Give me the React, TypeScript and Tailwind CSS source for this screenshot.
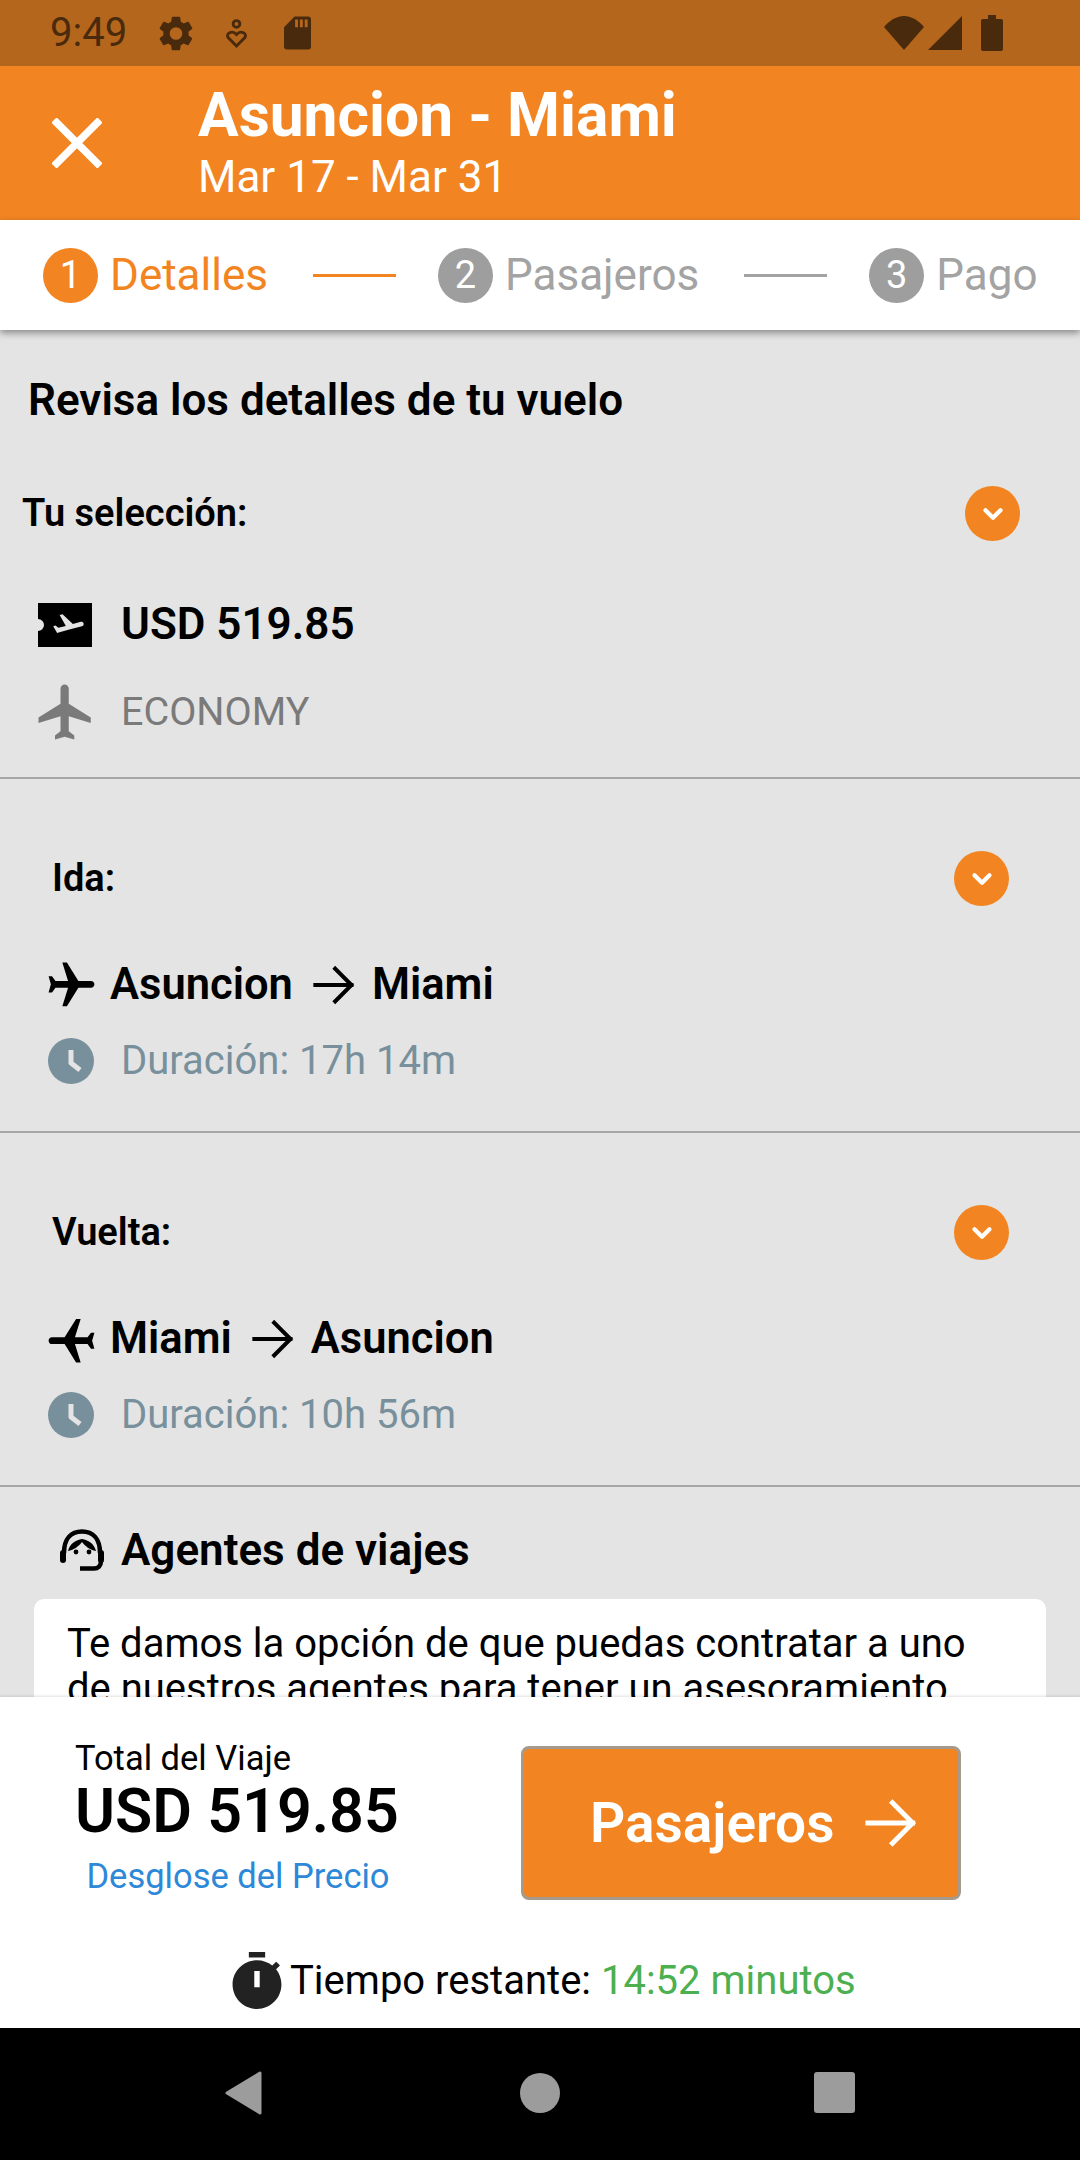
import { ChevronDown } from 'lucide-react';

const FONT = 'font-[Roboto,sans-serif]';

function Plane({ className, rotate }: { className: string; rotate?: number }) {
  return (
    <svg viewBox="0 0 24 24" className={className} fill="currentColor" style={rotate ? { transform: `rotate(${rotate}deg)` } : undefined}>
      <path d="M21 16v-2l-8-5V3.5c0-.83-.67-1.5-1.5-1.5S10 2.67 10 3.5V9l-8 5v2l8-2.5V19l-2 1.5V22l3.5-1 3.5 1v-1.5L13 19v-5.5l8 2.5z" />
    </svg>
  );
}

function Clock() {
  return (
    <svg viewBox="0 0 46 46" className="h-[46px] w-[46px] shrink-0">
      <circle cx="23" cy="23" r="23" fill="#78909c" />
      <path d="M23 12v13l9 7" fill="none" stroke="#e4e4e4" strokeWidth="5" strokeLinejoin="round" />
    </svg>
  );
}

function Arrow({ className }: { className: string }) {
  return (
    <svg viewBox="0 0 36 36" className={className} fill="none" stroke="currentColor" strokeWidth="3.4" strokeLinecap="square">
      <path d="M2 18h31M19 4l14 14-14 14" />
    </svg>
  );
}

function Toggle() {
  return (
    <div className="flex h-[55px] w-[55px] items-center justify-center rounded-full bg-[#f28522]">
      <ChevronDown className="h-[30px] w-[30px] text-white" strokeWidth={3.4} />
    </div>
  );
}

function Step({ n, label, active }: { n: number; label: string; active?: boolean }) {
  return (
    <div className="flex items-center gap-[12px]">
      <div className={`flex h-[55px] w-[55px] items-center justify-center rounded-full text-[38px] text-white ${active ? 'bg-[#f28522]' : 'bg-[#9e9e9e]'}`}>{n}</div>
      <span className={`text-[44px] leading-none ${active ? 'text-[#f28522]' : 'text-[#a3a3a3]'}`}>{label}</span>
    </div>
  );
}

function Leg({ label, from, to, duration, rotate }: { label: string; from: string; to: string; duration: string; rotate: number }) {
  return (
    <section className="h-[354px] border-b-2 border-[#a6a6a6]">
      <div className="flex h-[184px] items-start justify-between pl-[52px] pr-[71px] pt-[72px]">
        <span className="text-[38px] font-semibold leading-[55px] text-black">{label}</span>
        <Toggle />
      </div>
      <div className="flex h-[44px] items-center pl-[44px]">
        <Plane className="h-[55px] w-[55px] shrink-0 text-black" rotate={rotate} />
        <span className="ml-[11px] text-[43.500px] font-semibold leading-none text-black">{from}</span>
        <Arrow className="ml-[20px] mr-[17px] h-[42px] w-[42px] text-black" />
        <span className="text-[43.500px] font-semibold leading-none text-black">{to}</span>
      </div>
      <div className="mt-[30px] flex h-[48px] items-center pl-[48px]">
        <Clock />
        <span className="ml-[27px] text-[40px] leading-none text-[#78909c]">{duration}</span>
      </div>
    </section>
  );
}

export default function App() {
  return (
    <div className={`flex h-[2160px] w-[1080px] flex-col overflow-hidden bg-[#e4e4e4] ${FONT}`}>
      {/* barra de estado */}
      <div className="flex h-[66px] shrink-0 items-center bg-[#b4661c] pl-[50px] pr-[77px] text-[#4a2a0c]">
        <span className="text-[40px] leading-none text-[#4a2a0c]">9:49</span>
        <svg viewBox="2.500 2 19 20" className="ml-[32px] h-[35px] w-[34px]" fill="currentColor">
          <path d="M19.14 12.94c.04-.3.06-.61.06-.94s-.02-.64-.07-.94l2.03-1.58a.49.49 0 0 0 .12-.61l-1.92-3.32a.49.49 0 0 0-.59-.22l-2.39.96a7 7 0 0 0-1.62-.94l-.36-2.54a.48.48 0 0 0-.48-.41h-3.84a.48.48 0 0 0-.47.41l-.36 2.54c-.59.24-1.13.57-1.62.94l-2.39-.96a.48.48 0 0 0-.59.22L2.69 8.87a.47.47 0 0 0 .12.61l2.03 1.58c-.05.3-.09.63-.09.94s.02.64.07.94l-2.03 1.58a.49.49 0 0 0-.12.61l1.92 3.32c.12.22.37.29.59.22l2.39-.96c.5.38 1.03.7 1.62.94l.36 2.54c.05.24.24.41.48.41h3.84c.24 0 .44-.17.47-.41l.36-2.54c.59-.24 1.13-.56 1.62-.94l2.39.96c.22.08.47 0 .59-.22l1.92-3.32a.47.47 0 0 0-.12-.61l-2.01-1.58zM12 15.6A3.6 3.6 0 1 1 12 8.400a3.6 3.6 0 0 1 0 7.200z" />
        </svg>
        <svg viewBox="0 0 24 30" className="ml-[32px] h-[29px] w-[23px]" fill="none" stroke="currentColor" strokeWidth="3">
          <circle cx="12" cy="5" r="3.500" />
          <path d="M12 28l-8.500-8.500c-3.500-4.500 4-8.500 8.500-3.500 4.500-5 12-1 8.500 3.500z" />
        </svg>
        <svg viewBox="0 0 28 34" className="ml-[36px] h-[34px] w-[27px]" fill="currentColor">
          <path d="M11 0h14a3 3 0 0 1 3 3v28a3 3 0 0 1-3 3H3a3 3 0 0 1-3-3V11zM11.500 3v8h3V3zm5 0v8h3V3zm5 0v8h3V3z" fillRule="evenodd" />
        </svg>
        <div className="flex-1" />
        <svg viewBox="0 0 40 34" className="h-[34px] w-[40px]" fill="currentColor">
          <path d="M20 34L0 11C5 5 12 0 20 0s15 5 20 11z" />
        </svg>
        <svg viewBox="0 0 34 34" className="ml-[4px] h-[34px] w-[34px]" fill="currentColor">
          <path d="M34 0v34H0z" />
        </svg>
        <svg viewBox="0 0 22 36" className="ml-[19px] h-[36px] w-[22px]" fill="currentColor">
          <path d="M7 0h8v4h5a2 2 0 0 1 2 2v28a2 2 0 0 1-2 2H2a2 2 0 0 1-2-2V6a2 2 0 0 1 2-2h5z" />
        </svg>
      </div>

      {/* cabecera */}
      <header className="flex h-[154px] shrink-0 items-center bg-[#f28522] text-white">
        <svg viewBox="0 0 50 50" className="ml-[52px] h-[50px] w-[50px]" stroke="currentColor" strokeWidth="7.500">
          <path d="M2 2l46 46M48 2L2 48" />
        </svg>
        <div className="ml-[96px] flex flex-col pb-[3px]">
          <h1 className="text-[60.500px] font-bold leading-[66px]">Asuncion - Miami</h1>
          <p className="mt-[4px] text-[44px] leading-[48px]">Mar 17 - Mar 31</p>
        </div>
      </header>

      {/* pasos */}
      <nav className="z-10 flex h-[110px] shrink-0 items-center bg-white pl-[43px] shadow-[0_3px_7px_rgba(0,0,0,0.4)]">
        <Step n={1} label="Detalles" active />
        <div className="ml-[45px] mr-[42px] h-[3px] w-[83px] bg-[#f28522]" />
        <Step n={2} label="Pasajeros" />
        <div className="ml-[45px] mr-[42px] h-[3px] w-[83px] bg-[#a3a3a3]" />
        <Step n={3} label="Pago" />
      </nav>

      {/* contenido */}
      <main className="min-h-0 flex-1 overflow-hidden">
        <h2 className="pl-[28px] pt-[46px] text-[44px] font-semibold leading-[48px] text-black">Revisa los detalles de tu vuelo</h2>

        <section className="h-[355px] border-b-2 border-[#a6a6a6]">
          <div className="flex items-center justify-between pl-[22px] pr-[60px] pt-[62px]">
            <span className="text-[38px] font-semibold leading-[55px] text-black">Tu selección:</span>
            <Toggle />
          </div>
          <div className="mt-[62px] flex h-[44px] items-center pl-[38px]">
            <svg viewBox="0 0 54 44" className="h-[44px] w-[54px] shrink-0">
              <path d="M0 0h54v44H0V28a6 6 0 0 0 0-12z" fill="#000" />
              <g transform="translate(14 6) scale(1.500)" fill="#e4e4e4">
                <path d="M21.07 9.640c-.21-.8-1.04-1.28-1.84-1.06L13.92 10l-6.900-6.430-1.930.51 4.140 7.170-4.970 1.330-1.970-1.540-1.450.39 1.820 3.160.77 1.330 1.600-.43 5.310-1.420 4.350-1.160L20 11.490c.81-.23 1.280-1.050 1.070-1.850z" />
              </g>
            </svg>
            <span className="-mt-[3px] ml-[29px] text-[44px] font-semibold leading-none text-black">USD 519.85</span>
          </div>
          <div className="mt-[38px] flex h-[54px] items-center pl-[33px]">
            <Plane className="h-[66px] w-[66px] shrink-0 text-[#7a7a7a]" />
            <span className="ml-[22px] text-[39.500px] leading-none text-[#7a7a7a]">ECONOMY</span>
          </div>
        </section>

        <Leg label="Ida:" from="Asuncion" to="Miami" duration="Duración: 17h 14m" rotate={90} />
        <Leg label="Vuelta:" from="Miami" to="Asuncion" duration="Duración: 10h 56m" rotate={-90} />

        <div className="flex items-center pl-[59px] pt-[40px]">
          <svg viewBox="0 0 46 42" className="h-[42px] w-[46px] shrink-0" fill="none" stroke="#000" strokeWidth="4.500">
            <path d="M5 24C5 10 12 2.500 23 2.500S41 10 41 24" />
            <path d="M9 22C11 14 17 11 23 10c6 1 12 4 14 12-6-1-11-5-14-9-3 4-8 8-14 9z" fill="#000" stroke="none" />
            <rect x="1" y="21" width="6" height="13" rx="3" fill="#000" stroke="none" />
            <rect x="39" y="21" width="6" height="13" rx="3" fill="#000" stroke="none" />
            <path d="M42 32c0 5-3 7.500-7 7.500H21" />
            <circle cx="17" cy="23" r="2.400" fill="#000" stroke="none" />
            <circle cx="30" cy="23" r="2.400" fill="#000" stroke="none" />
          </svg>
          <span className="ml-[16px] text-[44px] font-semibold leading-[46px] text-black">Agentes de viajes</span>
        </div>
        <div className="mx-[34px] mt-[26px] rounded-[10px] bg-white px-[33px] pt-[22px] text-[40px] leading-[45px] text-black">
          Te damos la opción de que puedas contratar a uno de nuestros agentes para tener un asesoramiento personalizado durante todo tu viaje.
        </div>
      </main>

      {/* resumen */}
      <footer className="z-10 h-[331px] shrink-0 bg-white shadow-[0_-1px_3px_rgba(0,0,0,0.12)]">
        <div className="flex pt-[41px]">
          <div className="ml-[75px] flex w-[326px] flex-col">
            <span className="text-[34.500px] leading-[40px] text-black">Total del Viaje</span>
            <span className="whitespace-nowrap text-[61px] font-semibold leading-[66px] text-black">USD 519.85</span>
            <span className="mt-[12px] text-center text-[34.500px] leading-[40px] text-[#2e88d8]">Desglose del Precio</span>
          </div>
          <button type="button" className="ml-[120px] mt-[8px] flex h-[154px] w-[440px] items-center rounded-[8px] border-[3px] border-[#a59a8c] bg-[#f28522] pl-[66px] text-white">
            <span className="text-[55px] font-semibold leading-none">Pasajeros</span>
            <Arrow className="ml-[31px] h-[52px] w-[52px]" />
          </button>
        </div>
        <div className="mt-[52px] flex items-center pl-[232px]">
          <svg viewBox="3 1 18 21" className="h-[57px] w-[50px] shrink-0" fill="#222">
            <path fillRule="evenodd" d="M15 1H9v2h6V1zm4.030 6.390l1.420-1.420c-.43-.51-.9-.99-1.410-1.410l-1.420 1.420C16.070 4.740 14.120 4 12 4c-4.970 0-9 4.030-9 9s4.020 9 9 9 9-4.030 9-9c0-2.120-.74-4.070-1.970-5.610zM13 14h-2V8h2v6z" />
          </svg>
          <span className="ml-[8px] text-[40px] leading-none text-black">Tiempo restante: <span className="text-[#4caf50]">14:52 minutos</span></span>
        </div>
      </footer>

      {/* navegación */}
      <div className="relative flex h-[132px] shrink-0 items-center bg-black pb-[3px] pl-[225px]">
        <svg viewBox="0 0 37 44" className="h-[44px] w-[37px]" fill="#9c9c9c" stroke="#9c9c9c" strokeWidth="3" strokeLinejoin="round">
          <path d="M35 2v40L2 22z" />
        </svg>
        <div className="ml-[258px] h-[40px] w-[40px] rounded-full bg-[#9c9c9c]" />
        <div className="ml-[254px] h-[41px] w-[41px] rounded-[3px] bg-[#9c9c9c]" />
      </div>
    </div>
  );
}
